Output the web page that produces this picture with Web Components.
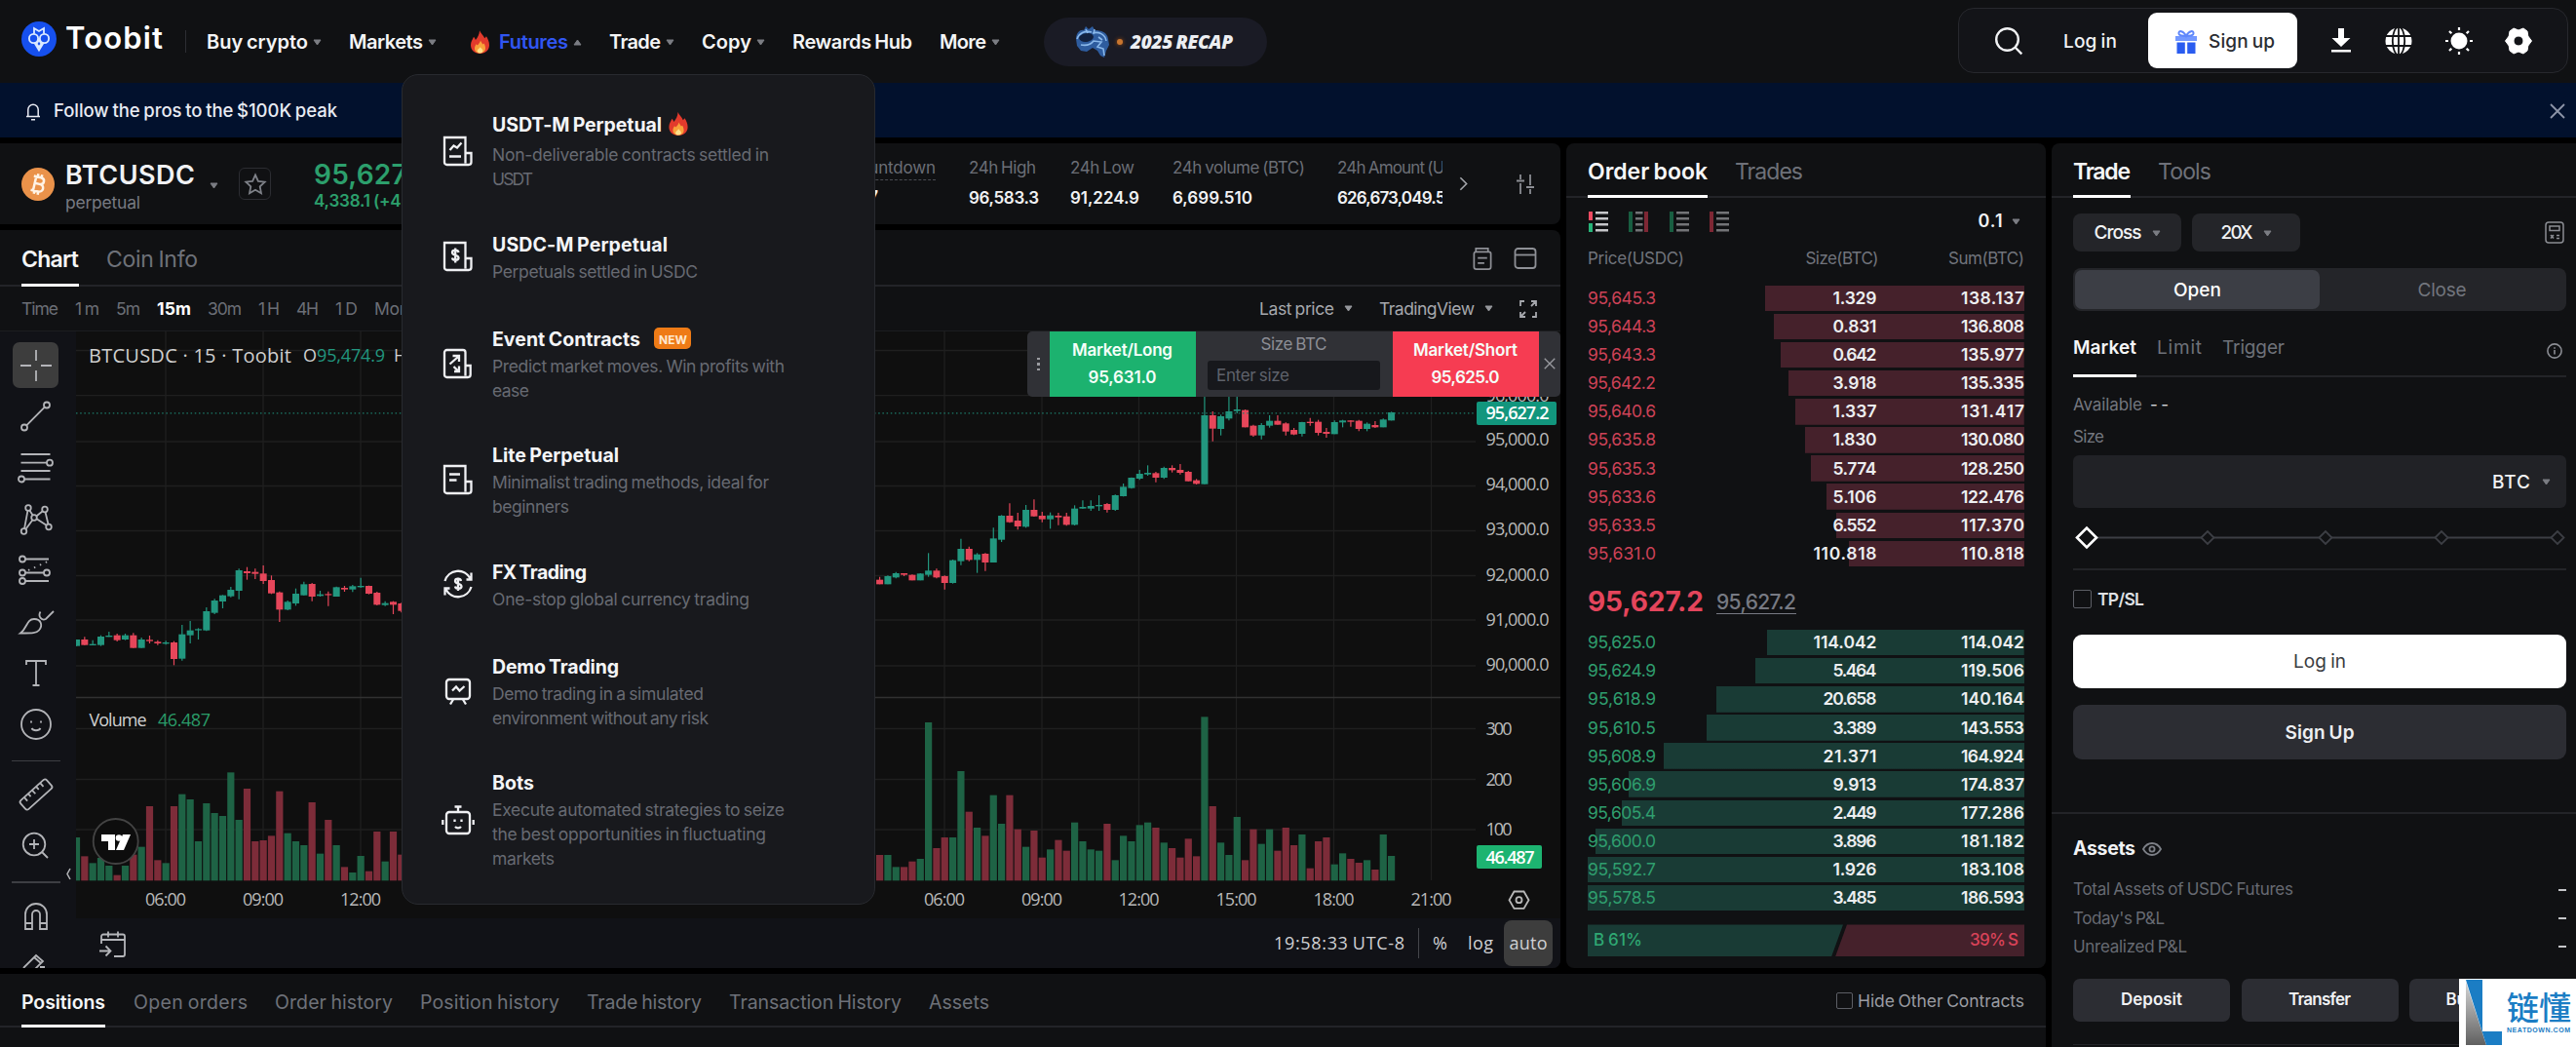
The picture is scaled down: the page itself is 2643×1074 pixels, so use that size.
<!DOCTYPE html>
<html lang="en">
<head>
<meta charset="utf-8">
<title>BTCUSDC perpetual | Toobit</title>
<style>
  html, body { margin: 0; padding: 0; }
  body {
    position: relative;
    width: 2643px;
    height: 1074px;
    overflow: hidden;
    background: #000;
    color: #f1f2f4;
    font-family: Inter, "Liberation Sans", sans-serif;
    font-size: 18px;
    --panel: #101113;
    --line: #232428;
    --muted: #6b6e76;
    --up: #2c9f6c;
    --down: #d6435a;
  }
</style>
</head>
<body>
<toobit-app></toobit-app>

<script>
const ICONS = {
  logo: ['0 0 36 36', `<circle cx="18" cy="18" r="18" fill="#1650ee" stroke="none"/><g fill="none" stroke="#dcebff" stroke-width="1.800"><circle cx="12.500" cy="17.500" r="4.600"/><circle cx="23.500" cy="17.500" r="4.600"/><path d="M13 12.500V7l5 3 5-3v5.500M13.500 22L18 29.500l4.500-7.500M18 19l-2.500 4L18 26l2.500-3z"/></g>`],
  fire: ['0 0 20 25', `<g stroke="none"><path d="M9.500 0c1 3 4.500 5.500 5.500 8.500l1.800-2C18.500 9 20 12.500 20 16c0 5.500-4 9-10 9S0 21.500 0 16c0-4 2-6 3.200-9 1 1 1.500 2 2 3.300C7.500 7.500 9.500 4 9.500 0z" fill="#e23a2c"/><path d="M10.500 11c.8 2 2 3 2.500 4.200l1.200-1c1 1.500 1.600 3 1.600 5 0 3.500-2.300 5.300-5.800 5.300s-5.800-1.800-5.800-5c0-2.200 1-3.300 1.600-4.700l1.500 1.300c1.600-1.600 2.700-3 3.200-5.100z" fill="#f9a13a"/><path d="M10.300 18c.6 1.500 2.700 2 2.700 4s-1.300 2.500-3 2.500-3-.8-3-2.400c0-1.800 2.400-2.300 3.300-4.100z" fill="#fde08a"/></g>`],
  croc: ['0 0 36 34', `<g stroke="none"><path d="M1 14c0-7 5-10 8-9l2-4 3 3 4-3 2 4c7 0 13 2 14 9l1 6-3 6-2 7-4-2-3-5-5-3-6 4-6-1-4-5z" fill="#2e5c9e"/><path d="M4 13c1-4 6-5 10-5s7 4 3 7-12 3-13-2z" fill="#12213f"/></g><path d="M2 14c2-6 8-9 15-7M18 8c6-2 13 1 14 8M6 20c5 1 10 0 13-4l8 1-4 5 6 2 1 7M11 4l2 4M20 4l-1 5M24 12l4 3" stroke="#8ab8ea" stroke-width="1.600" fill="none"/>`],
  search: ['0 0 28 28', `<circle cx="12.500" cy="12.500" r="11.300"/><path d="M20.500 20.500l6.800 6.800"/>`],
  gift: ['0 0 22 24', `<g fill="#2a5cf0" stroke="none"><path d="M0 6h22v5H0z" fill="#7398ff"/><path d="M1.500 12.500h8.300V24H1.500zM12.200 12.500h8.300V24h-8.300z"/></g><path d="M11 6C8 0 3 0 3.500 3.500 4 6 8 6 11 6c3 0 7 0 7.500-2.500C19 0 14 0 11 6z" stroke="#5f87fb" stroke-width="2"/>`],
  download: ['0 0 22 25', `<path d="M8 0h6v10h6.500L11 19 1.500 10H8zM1 22h20v2.500H1z" fill="#fff" stroke="none"/>`],
  globe: ['0 0 28 28', `<circle cx="14" cy="14" r="13.500" fill="#fff" stroke="none"/><path d="M14 0v28M0 9h28M0 19h28" stroke="#131417" stroke-width="1.800"/><ellipse cx="14" cy="14" rx="6.200" ry="14.500" stroke="#131417" stroke-width="1.800"/>`],
  sun: ['0 0 28 28', `<circle cx="14" cy="14" r="8.500" fill="#fff" stroke="none"/><path d="M14 0v3M14 25v3M0 14h3M25 14h3M4 4l2.300 2.300M21.700 21.700L24 24M24 4l-2.300 2.300M4 24l2.300-2.300" stroke="#fff" stroke-width="2.200"/>`],
  gear: ['0 0 28 28', `<path fill-rule="evenodd" fill="#fff" stroke="#fff" stroke-width="1" stroke-linejoin="round" d="M9 1l5 2 5-2 4 3 .8 5L27.500 14l-3.700 5-.8 5-4 3-5-2-5 2-4-3-.8-5L.5 14l3.700-5L5 4zM14 9a5 5 0 100 10 5 5 0 000-10z"/>`],
  bell: ['0 0 16 19', `<path d="M1 14.500h14M2.800 14.500V7.500a5.200 5.200 0 0110.400 0v7M6 17.800h4"/>`],
  close: ['0 0 16 16', `<path d="M1 1l14 14M15 1L1 15"/>`],
  btc: ['0 0 34 34', `<circle cx="17" cy="17" r="17" fill="#ea924a" stroke="none"/><g transform="rotate(13 17 17)" fill="none" stroke="#fff3e6" stroke-width="2.500"><path d="M13.500 9.500v15M11 9.700h7.500c5 0 5 6.800 0 6.800h-5M18.500 16.500c6 0 6 7.800 0 7.800H11M15 6.500v3M19 6.500v3M15 24.500v3M19 24.500v3"/></g>`],
  star: ['0 0 22 22', `<path d="M11 1.500l2.900 6.300 6.800.8-5 4.700 1.300 6.900-6-3.400-6 3.400 1.300-6.900-5-4.700 6.800-.8z"/>`],
  chevron: ['0 0 10 16', `<path d="M1.500 1l7 7-7 7"/>`],
  sliders: ['0 0 20 20', `<path d="M5 0v5M5 9v11M1 6.500h8M15 0v11M15 15v5M11 13h8"/>`],
  doc: ['0 0 20 24', `<path d="M3 4.500h14a2 2 0 012 2v14a2.500 2.500 0 01-2.500 2.500h-13A2.500 2.500 0 011 20.500v-14a2 2 0 012-2zM3 4.500V1h13v3.500M5 11h10M5 16.500h7"/>`],
  window: ['0 0 24 22', `<rect x="1.500" y="1" width="21" height="20" rx="3"/><path d="M1.500 7.500h21"/>`],
  expand: ['0 0 18 18', `<path d="M1 6V1h4M12 1h5v5M17 1l-5 5M17 12v5h-4M6 17H1v-5M1 17l5-5"/>`],
  calc: ['0 0 20 23', `<rect x="1" y="1" width="18" height="21" rx="3"/><path d="M5 5h10v4.500H5zM6 14l3 3.500M9 14l-3 3.500M12 14.500h3M12 17.500h3"/>`],
  info: ['0 0 18 18', `<circle cx="9" cy="9" r="8"/><path d="M9 8v5M9 4.700v1.800"/>`],
  eye: ['0 0 20 14', `<path d="M1 7c4.500-8 13.500-8 18 0-4.500 8-13.500 8-18 0z"/><circle cx="10" cy="7" r="2.600"/>`],
  calendar: ['0 0 28 28', `<path d="M3 14V6.500A2 2 0 015 4.500h20a2 2 0 012 2V25a2 2 0 01-2 2h-9M3 10h24M10 1.500v6M20 1.500v6M1 21.500h11M7.500 16.500l5 5-5 5"/>`],
  mUsdt: ['0 0 30 30', `<path d="M22.500 27.500V1H1v25.500A2.500 2.500 0 003.500 29h22.300a2.700 2.700 0 002.700-2.700V17h-6M6.500 14l4-4.500 3.500 2 4.500-5M6 20.500h12"/>`],
  mUsdc: ['0 0 30 30', `<path d="M22.500 27.500V1H1v25.500A2.500 2.500 0 003.500 29h22.300a2.700 2.700 0 002.700-2.700V17h-6M15.500 11c-.5-3-6.500-3-6.500 0 0 3.500 6.500 2 6.500 5.500 0 3-6 3-6.500 0M12.200 6.500v15"/>`],
  mEvent: ['0 0 30 30', `<path d="M22.500 27.500V3.500A2.500 2.500 0 0020 1H3.500A2.500 2.500 0 001 3.500v23A2.500 2.500 0 003.500 29h21.500a2.700 2.700 0 002.700-2.700V17h-5M6.500 15.500L15 8M9.500 7H16v6M10.500 18l5 5M16 17.500V23h-5"/>`],
  mLite: ['0 0 30 30', `<path d="M22.500 27.500V1H1v25.500A2.500 2.500 0 003.500 29h22.300a2.700 2.700 0 002.700-2.700V17h-6M6 9.500h11M6 15.500h7.500"/>`],
  mFx: ['0 0 30 30', `<path d="M1.500 12a14 14 0 0126-2.500M28.500 3.500v7h-5M28.500 18a14 14 0 01-26 2.500M1.500 26.500v-7h5M18 12c-.5-3-6-3-6 0 0 3.500 6.500 2 6.500 5.500 0 3-6 3-6.500 0M15 8.500V22"/>`],
  mDemo: ['0 0 30 30', `<rect x="3" y="3" width="24" height="20" rx="3"/><path d="M9 14.500l4-4 3.500 4 5-4.500M10 23.500l-3 5M20 23.500l3 5"/>`],
  mBots: ['0 0 34 32', `<rect x="5" y="8" width="24" height="22" rx="3"/><path d="M17 8V2M13.500 2.500h7M1.300 16v5M32.700 16v5M13.500 15.500v2.500M20.500 15.500v2.500M14 23c1.500 1.800 4.500 1.800 6 0"/>`],
  tCross: ['0 0 40 40', `<path d="M20 4v11M20 25v11M4 20h11M25 20h11"/>`],
  tLine: ['0 0 40 40', `<circle cx="31" cy="8.500" r="3"/><circle cx="8" cy="31.500" r="3"/><path d="M10.200 29.300L28.800 10.700"/>`],
  tFib: ['0 0 40 40', `<path d="M4.500 6h30M4.500 14.700H31M4.500 23h30M8 31.500h26.500"/><circle cx="34" cy="14.700" r="3"/><circle cx="5" cy="31.500" r="3"/>`],
  tPattern: ['0 0 40 40', `<circle cx="12" cy="8" r="2.800"/><circle cx="29" cy="9.500" r="2.800"/><circle cx="18" cy="18" r="2.800"/><circle cx="7.500" cy="32" r="2.800"/><circle cx="33" cy="27.500" r="2.800"/><path d="M11.500 10.700L8 29.300M13.300 10.500l3.400 5M20.300 16.500l6.500-5.200M29.500 12.300l3 12.500M9.300 30l7.200-9.700M20.600 19.300l10 6.500"/>`],
  tForecast: ['0 0 40 40', `<circle cx="6" cy="8.500" r="3"/><circle cx="6" cy="22.500" r="3"/><circle cx="31" cy="22.500" r="3"/><circle cx="6" cy="31" r="3"/><path d="M9 8.500h24M9 22.500h19M9 31h24"/><path d="M12 20l20-9" stroke-dasharray="1.500 5"/>`],
  tBrush: ['0 0 40 40', `<path d="M4 31.500c7-5 6-14.500 14-14.500 7.500 0 9 7 5 11.500-3 3.500-9 3-19 3zM24.500 9.500c-3 5 1.500 9.500 5.500 7.500L38 9"/>`],
  tText: ['0 0 40 40', `<path d="M10 11V7h20v4M20 7v25M16.500 32h7"/>`],
  tSmile: ['0 0 40 40', `<circle cx="20" cy="20" r="15"/><path d="M15 16.500v2M25 16.500v2M15.500 24c1.500 3 7.500 3 9 0"/>`],
  tRuler: ['0 0 40 40', `<g transform="rotate(-42 20 20)"><rect x="2" y="14" width="36" height="12" rx="2.500"/><path d="M9 14v5M14.500 14v4M20 14v5M25.500 14v4M31 14v5"/></g>`],
  tZoom: ['0 0 40 40', `<circle cx="18" cy="18" r="11.300"/><path d="M26 26l6 6M18 13v10M13 18h10"/>`],
  tMagnet: ['0 0 40 40', `<path d="M9 33V18a11 11 0 0122 0v15h-7V18a4 4 0 00-8 0v15zM9 27h7M24 27h7"/>`],
  tPencil: ['0 0 40 40', `<path d="M7 21L20 8l7 6-13 13M18 10l7 6M24 20h5"/>`]
};

const icon = (name, w, h = w, extra = '') =>
  `<svg class="icon" width="${w}" height="${h}" viewBox="${ICONS[name][0]}" fill="none" stroke="currentColor" stroke-width="1.800" ${extra}>${ICONS[name][1]}</svg>`;

const t = (text, w, cls = '') => `<fit-text w="${w}" class="${cls}">${text}</fit-text>`;

class Base extends HTMLElement {
  constructor() {
    super();
    this.attachShadow({ mode: "open" });
  }

  connectedCallback() {
    this.render();
  }

  get style_() { return ""; }
  get template() { return ""; }

  render() {
    this.shadowRoot.innerHTML = `<style>
      * { box-sizing: border-box; }
      .icon { display: block; flex: none; overflow: visible; }
      .row { display: flex; align-items: center; }
      ${this.style_}
    </style>${this.template}`;
  }
}

// Text of a fixed width: the tracking is spread so the words fill it.
class FitText extends Base {
  get style_() {
    return `
      :host { display: block; flex: none; white-space: nowrap; line-height: 1.25; word-spacing: -.06em; }
      span { display: inline-block; }
    `;
  }

  get template() {
    return `<span><slot></slot></span>`;
  }

  render() {
    super.render();
    const w = parseFloat(this.getAttribute("w"));
    const span = this.shadowRoot.querySelector("span");
    const n = Math.max(this.textContent.length - 1, 1);
    const gap = (w - span.getBoundingClientRect().width) / n;
    this.style.letterSpacing = gap.toFixed(3) + "px";
    this.style.width = w + "px";
  }
}

class CaretMark extends Base {
  get style_() {
    return `
      :host { display: block; flex: none; color: #7b7d83; }
      :host([up]) svg { transform: rotate(180deg); }
      svg { display: block; }
    `;
  }

  get template() {
    return `<svg width="9" height="7" viewBox="0 0 9 7"><path d="M1 1h7L4.500 6z" fill="currentColor" stroke="currentColor" stroke-linejoin="round"/></svg>`;
  }
}

class NavItem extends Base {
  get style_() {
    return `
      :host { display: flex; align-items: center; font-size: 20px; font-weight: 600; color: #f4f5f6; }
      :host([open]) { color: #3056f2; }
      .icon { margin: -2px 10px 0 7px; }
      caret-mark { margin-left: 5px; }
    `;
  }

  get template() {
    const open = this.hasAttribute("open");
    return `${open ? icon("fire", 19, 24) : ""}
      ${t(this.getAttribute("label"), this.getAttribute("w"))}
      ${this.hasAttribute("plain") ? "" : `<caret-mark ${open ? "up" : ""}></caret-mark>`}`;
  }
}

class TopBar extends Base {
  get style_() {
    return `
      :host { display: flex; align-items: center; height: 85px; padding: 0 8px 0 22px; background: #101113; }
      .brand { display: flex; align-items: center; gap: 9px; margin-top: -6px; }
      .brand fit-text { font-size: 31px; font-weight: 600; color: #fff; }
      .divider { width: 1px; height: 23px; margin: 0 21px 0 23px; background: #2d2e33; }
      nav { display: flex; align-items: center; gap: 28px; padding-top: 2px; }
      .recap { width: 229px; height: 50px; margin-left: 45px; padding-left: 32px; border-radius: 25px; background: #1a1b25; display: flex; align-items: center; }
      .recap i { width: 6px; height: 6px; margin: 0 8px 0 7px; border-radius: 50%; background: #c9762f; box-shadow: 0 0 4px #9c4d14; }
      .recap fit-text { font: italic 800 19px "Open Sans", sans-serif; color: #eceef2; }
      .account { display: flex; align-items: center; width: 626px; height: 67px; margin-left: auto; margin-top: -2px; padding-left: 37px; border: 1px solid #27282d; border-radius: 16px; background: #131418; }
      .account > fit-text { margin: 3px 32px 0 42px; font-size: 19px; font-weight: 500; }
      button { width: 153px; height: 57px; margin: 0 34px 0 0; padding: 2px 0 0 28px; border: 0; border-radius: 9px; background: #fff; color: #2a2c31; display: flex; align-items: center; gap: 12px; font: 500 19px Inter, sans-serif; }
      .tools { display: flex; align-items: center; gap: 34px; }
      .tools .icon:last-child { margin-left: -1px; }
    `;
  }

  get template() {
    return `
      <div class="brand">${icon("logo", 36)}${t("Toobit", 100)}</div>
      <div class="divider"></div>
      <nav>
        <nav-item label="Buy crypto" w="104"></nav-item>
        <nav-item label="Markets" w="76"></nav-item>
        <nav-item label="Futures" w="71" open></nav-item>
        <nav-item label="Trade" w="53"></nav-item>
        <nav-item label="Copy" w="51"></nav-item>
        <nav-item label="Rewards Hub" w="123" plain></nav-item>
        <nav-item label="More" w="48"></nav-item>
      </nav>
      <div class="recap">${icon("croc", 36, 34)}<i></i>${t("2025 RECAP", 105)}</div>
      <div class="account">
        ${icon("search", 28, 28, 'style="stroke-width:2.400"')}
        ${t("Log in", 55)}
        <button>${icon("gift", 22, 24)}${t("Sign up", 68)}</button>
        <div class="tools">${icon("download", 22, 25)}${icon("globe", 28)}${icon("sun", 28)}${icon("gear", 28)}</div>
      </div>
    `;
  }
}

class NoticeBar extends Base {
  get style_() {
    return `
      :host { display: flex; align-items: center; height: 56px; padding: 2px 11px 0 26px; background: #02112d; color: #e8ebf3; font-size: 18.500px; font-weight: 500; }
      fit-text { margin-left: 13px; }
      .icon:last-of-type { margin-left: auto; color: #8d95a8; }
    `;
  }

  get template() {
    return `${icon("bell", 16, 19, 'style="stroke-width:1.500"')}<fit-text w="291">Follow the pros to the $100K peak</fit-text>${icon("close", 16)}`;
  }
}

class MenuItem extends Base {
  get style_() {
    return `
      :host { display: grid; grid-template-columns: 34px 1fr; column-gap: 18px; align-items: center; color: #fff; }
      .icon { justify-self: center; stroke-width: 2.300; color: #eff0f3; margin-top: -3px; }
      .title { display: flex; align-items: center; height: 25px; gap: 7px; font-size: 19.500px; font-weight: 700; color: #f4f5f7; }
      .title .icon { margin-top: -4px; }
      .tag { margin: -3px 0 0 7px; width: 38px; height: 22px; padding: 5px 0 0 5px; border-radius: 5px; background: #ef7b16; color: #ffe9d0; font-size: 12px; font-weight: 700; line-height: 1; }
      .text { font-size: 17.500px; line-height: 25px; color: #676a72; padding-top: 2px; }
      :host([hot]) .text { padding-top: 5px; }
      .text fit-text { line-height: 25px; }
    `;
  }

  get template() {
    const lines = this.getAttribute("lines").split("|").map(l => l.split("~"));
    const [label, w] = this.getAttribute("label").split("~");
    const name = this.getAttribute("icon");
    return `${name === "mBots" ? icon(name, 34, 32) : icon(name, 30)}
      <div>
        <div class="title">${t(label, w)}${this.hasAttribute("hot") ? icon("fire", 20, 24) : ""}${this.hasAttribute("new") ? `<div class="tag">${t("NEW", 29)}</div>` : ""}</div>
        <div class="text">${lines.map(([s, n]) => t(s, n)).join("")}</div>
      </div>`;
  }
}

class FuturesMenu extends Base {
  get style_() {
    return `
      :host { display: flex; flex-direction: column; gap: 45px; width: 486px; height: 852px; padding: 39px 0 0 40px; border: 1px solid #282a2f; border-radius: 17px; background: #18191d; }
      menu-item.tight { margin-bottom: -2.500px; }
    `;
  }

  get template() {
    return `
      <menu-item hot icon="mUsdt" class="tight" label="USDT-M Perpetual~174" lines="Non-deliverable contracts settled in~284|USDT~42"></menu-item>
      <menu-item icon="mUsdc" label="USDC-M Perpetual~180" lines="Perpetuals settled in USDC~211"></menu-item>
      <menu-item new icon="mEvent" class="tight" label="Event Contracts~152" lines="Predict market moves. Win profits with~300|ease~38"></menu-item>
      <menu-item icon="mLite" class="tight" label="Lite Perpetual~130" lines="Minimalist trading methods, ideal for~284|beginners~79"></menu-item>
      <menu-item icon="mFx" label="FX Trading~97" lines="One-stop global currency trading~264"></menu-item>
      <menu-item icon="mDemo" class="tight" label="Demo Trading~130" lines="Demo trading in a simulated~217|environment without any risk~222"></menu-item>
      <menu-item icon="mBots" label="Bots~43" lines="Execute automated strategies to seize~300|the best opportunities in fluctuating~281|markets~64"></menu-item>
    `;
  }
}

class TickerBar extends Base {
  get style_() {
    return `
      :host { display: flex; align-items: center; height: 83px; padding-left: 22px; background: var(--panel); border-radius: 0 8px 8px 0; overflow: hidden; }
      .name { margin-left: 11px; width: 133px; padding-top: 5px; }
      .name fit-text:first-child { font-size: 27px; font-weight: 600; line-height: 34px; }
      .name fit-text:last-child { font-size: 17.500px; color: #777a82; }
      caret-mark { margin: 3px 21px 0 15px; }
      .fav { display: grid; place-items: center; width: 33px; height: 33px; border: 1.500px solid #2c2d32; border-radius: 6px; color: #7e8188; }
      .price { margin-left: 44px; width: 130px; padding-top: 3px; color: var(--up); font-weight: 600; }
      .price fit-text:first-child { font-size: 28px; line-height: 34px; }
      .price fit-text:last-child { font-size: 17px; }
      .stats { display: flex; margin-left: 407px; width: 621px; overflow: hidden; margin-top: -1px; }
      .stat { flex: none; display: flex; flex-direction: column; gap: 9px; font-size: 17px; font-weight: 600; }
      .stat fit-text:first-child { font-weight: 400; color: var(--muted); }
      .count fit-text:first-child { align-self: flex-end; border-bottom: 1.500px dashed #4a4c52; margin-bottom: -1.500px; }
      .chev { margin-left: 17px; color: #a3a5aa; }
      .opts { margin-left: 49px; color: #8b8d93; }
    `;
  }

  get template() {
    const stat = (label, lw, value, vw, width) =>
      `<div class="stat" style="width:${width}px">${t(label, lw)}${t(value, vw)}</div>`;
    return `
      ${icon("btc", 34, 34, 'style="margin-top:1px"')}
      <div class="name">${t("BTCUSDC", 133)}${t("perpetual", 77)}</div>
      <caret-mark></caret-mark>
      <div class="fav">${icon("star", 22)}</div>
      <div class="price">${t("95,627.2", 119)}${t("4,338.1 (+4.75%)", 137)}</div>
      <div class="stats">
        <div class="stat count" style="width:101px;margin-right:34px">${t("Countdown", 91)}${t("01:27", 42)}</div>
        ${stat("24h High", 69, "96,583.3", 72, 104)}
        ${stat("24h Low", 66, "91,224.9", 71, 105)}
        ${stat("24h volume (BTC)", 136, "6,699.510", 82, 169)}
        ${stat("24h Amount (USDC)", 149, "626,673,049.573", 130, 150)}
      </div>
      <div class="chev">${icon("chevron", 9, 15)}</div>
      <div class="opts">${icon("sliders", 20)}</div>
    `;
  }
}

class TabStrip extends Base {
  // tabs: "label~width|label~width", the first is the active one
  get style_() {
    return `
      :host { display: flex; align-items: stretch; box-sizing: border-box; height: 57px; padding: 0 22px; border-bottom: 2px solid var(--line); font-size: var(--size, 23px); }
      .tab { display: flex; align-items: center; margin-right: var(--gap, 28px); color: #6e7179; margin-bottom: -2px; padding-top: var(--drop, 0px); border-bottom: 3px solid transparent; }
      .tab:first-of-type { font-weight: 600; color: #f5f6f7; border-color: #fff; }
      .end { margin-left: auto; display: flex; align-items: center; }
    `;
  }

  get template() {
    const gaps = (this.getAttribute("gaps") || "").split(",");
    return this.getAttribute("tabs").split("|").map((tab, i) => {
      const [s, w] = tab.split("~");
      return `<div class="tab" ${gaps[i] ? `style="margin-right:${gaps[i]}px"` : ""}>${t(s, w)}</div>`;
    }).join("") + `<div class="end"><slot></slot></div>`;
  }
}

// candle: colour, high, body top, body bottom, low (thirds of a pixel from the series base), volume top
const EARLY = `g 1068 1068 1088 1088 507
r 1060 1068 1085 1085 565
g 1070 1082 1086 1086 586
g 1055 1059 1085 1088 570
g 1044 1056 1060 1060 594
r 1050 1055 1070 1074 623
g 1050 1055 1068 1070 594
r 1048 1055 1094 1094 560
g 1062 1068 1094 1094 536
r 1056 1069 1073 1080 411
r 1070 1075 1080 1085 577
g 1072 1077 1081 1084 586
r 1073 1077 1128 1147 411
g 1023 1052 1127 1133 374
g 1011 1040 1055 1080 390
g 1033 1036 1039 1068 519
g 969 981 1040 1042 402
g 943 948 986 990 432
g 931 932 951 972 441
g 906 915 935 938 307
g 850 855 918 944 453
r 845 858 864 884 357
r 850 860 866 882 519
r 840 865 888 897 516
r 871 885 926 928 502
r 920 923 976 1014 365
g 948 952 976 978 494
g 911 927 957 964 519
g 890 898 932 932 531
r 894 897 936 950 399
g 918 929 934 936 557
r 920 928 931 965 453
g 905 907 936 936 531
r 903 909 914 921 598
g 900 904 914 922 615
g 878 903 907 909 564
r 902 903 927 929 611
r 921 924 961 963 489
g 950 956 962 965 581
r 950 952 961 990 489
r 955 957 980 985 560`;

const LATE = `r 815 824 838 838 561
g 811 813 838 838 561
g 800 804 817 820 598
r 804 804 809 813 598
r 808 809 826 826 581
g 804 805 826 826 573
g 742 796 809 815 153
r 790 796 817 820 540
r 811 813 834 854 507
g 762 764 834 836 507
g 698 729 767 779 303
r 722 729 763 767 428
g 742 746 763 803 477
r 742 744 771 797 502
g 664 697 771 771 377
g 625 627 701 708 465
r 589 627 647 649 377
r 618 642 660 670 482
g 594 609 661 664 536
r 577 609 629 630 486
r 615 627 638 647 569
g 617 626 638 667 544
r 618 627 632 656 515
r 618 629 655 658 548
g 595 605 655 657 461
g 580 600 605 606 519
g 580 597 605 612 544
g 564 594 598 612 548
r 588 591 609 617 465
g 562 564 609 612 577
g 528 538 567 568 502
g 509 510 542 544 519
g 486 498 513 517 469
g 472 495 500 504 461
r 492 496 510 524 477
g 476 480 510 514 523
r 472 480 487 494 540
r 468 486 495 500 569
r 489 492 521 521 511
r 514 518 529 531 565
g 257 318 530 530 136
r 306 318 359 398 411
g 316 321 360 380 523
g 260 306 328 334 561
g 258 300 305 312 444
r 300 302 355 355 577
r 347 350 380 384 482
g 342 348 380 392 527
g 318 335 350 356 482
r 318 335 347 347 548
r 340 343 368 380 477
r 357 363 377 379 531
g 338 339 375 383 498
r 326 338 342 350 602
r 332 338 372 380 519
r 357 369 375 387 507
g 334 339 376 376 590
g 332 334 340 355 556
r 333 334 338 353 573
r 332 335 360 367 585
g 340 344 360 367 577
r 336 348 355 357 606
g 328 331 355 355 498
g 307 309 334 334 564`;

class PriceChart extends Base {
  get style_() {
    return `
      :host { display: block; width: 1523px; height: 602px; background: #0f0f0f; }
      svg { display: block; }
      text { font-family: "Open Sans", "Noto Sans", sans-serif; font-size: 18px; font-weight: 500; fill: #b9b9b9; }
      .grid { stroke: #1f1f1f; stroke-width: 1.300; }
    `;
  }

  series(data, x0, base) {
    const body = { g: "#22977f", r: "#e6465a" };
    const vol = { g: "#1e6345", r: "#7d2c39" };
    return data.split("\n").map((line, i) => {
      const [c, ...v] = line.split(" ");
      const [hi, top, bottom, lo] = v.map(n => base + n / 3);
      const vy = 690 + v[4] / 3;
      const x = x0 + i * 8.333;
      return `<path d="M${x} ${hi}V${lo}" stroke="${body[c]}" stroke-width="1.200"/>
        <rect x="${x - 3.500}" y="${top}" width="7" height="${Math.max(bottom - top, 1.200)}" fill="${body[c]}"/>
        <rect x="${x - 3.600}" y="${vy}" width="7.200" height="${903.300 - vy}" fill="${vol[c]}"/>`;
    }).join("");
  }

  get template() {
    const hs = [359.500, 405.700, 453, 498.500, 544.500, 590.500, 636, 683, 747.500, 799.500, 851];
    const vs = [[170, "06:00"], [270, "09:00"], [370, "12:00"], [969, "06:00"], [1069, "09:00"], [1168.500, "12:00"], [1268.500, "15:00"], [1368.500, "18:00"], [1468.500, "21:00"]];
    const prices = [["96,000.0", 405], ["95,000.0", 450.500], ["94,000.0", 496.500], ["93,000.0", 542.500], ["92,000.0", 589], ["91,000.0", 635], ["90,000.0", 681]];
    const txt = (s, x, y, w, extra = "") => `<text x="${x}" y="${y}" textLength="${w}" ${extra}>${s}</text>`;
    return `
      <svg width="1523" height="602" viewBox="78 340 1523 602">
        <g class="grid">
          ${hs.map(y => `<path d="M78 ${y}H1514"/>`).join("")}
          ${vs.map(([x]) => `<path d="M${x} 340V903"/>`).join("")}
        </g>
        <path d="M78 715.500H1601" stroke="#313131" stroke-width="1.500"/>
        ${this.series(EARLY, 78.500, 300)}
        ${this.series(LATE, 902.600, 320)}
        <path d="M78 423.800H1514" stroke="#1d7d6b" stroke-width="1.300" stroke-dasharray="1.500 2.700"/>
        ${txt("BTCUSDC · 15 · Toobit", 91, 371.500, 208, 'style="font-size:20px;fill:#cfcfcf"')}
        ${txt("O", 311, 370.500, 12, 'style="fill:#cfcfcf"')}
        ${txt("95,474.9", 325, 370.500, 70, 'style="fill:#22977f"')}
        ${txt("H", 404, 370.500, 12, 'style="fill:#cfcfcf"')}
        ${txt("Volume", 91.500, 745, 59, 'style="fill:#cfcfcf"')}
        ${txt("46.487", 162, 745, 54, 'style="fill:#2a9c68"')}
        ${prices.map(([s, y]) => txt(s, 1524.500, y + 6.500, 65)).join("")}
        ${[["300", 747.500], ["200", 799], ["100", 850.500]].map(([s, y]) => txt(s, 1524.500, y + 6.500, 27)).join("")}
        <rect x="1515" y="412" width="82" height="24" rx="2" fill="#12967d"/>
        ${txt("95,627.2", 1524.500, 429.500, 65, 'style="fill:#fff;font-weight:600"')}
        <rect x="1515" y="867" width="67" height="24" rx="2" fill="#1db471"/>
        ${txt("46.487", 1524.500, 885.500, 50, 'style="fill:#fff;font-weight:600"')}
        ${vs.map(([x, s]) => txt(s, x - 21, 928.500, 42)).join("")}
        <circle cx="118.700" cy="863" r="23" fill="#0d0d0d" stroke="#434343" stroke-width="1.800"/>
        <path d="M104 856h14v16h-7v-9h-7zM126 856h8l-7 16h-8z" fill="#fff"/>
        <circle cx="122" cy="859.500" r="3.300" fill="#fff"/>
        <g fill="none" stroke="#b9b9b9" stroke-width="1.800"><path d="M1553.500 914.500h10l5 8.700-5 8.700h-10l-5-8.700z"/><circle cx="1558.500" cy="923.200" r="3"/></g>
      </svg>
    `;
  }
}

class QuickTrade extends Base {
  get style_() {
    return `
      :host { display: flex; width: 547px; height: 66.500px; background: #303136; border-radius: 5px; font-size: 17px; font-weight: 600; color: #f5fff9; overflow: hidden; }
      .grip { width: 22.500px; display: flex; flex-direction: column; align-items: center; justify-content: center; gap: 3px; }
      .grip i { width: 2.500px; height: 2.500px; background: #9b9ca1; }
      .side { width: 150px; display: flex; flex-direction: column; align-items: center; justify-content: center; gap: 6.500px; background: #1cb26f; }
      .side.short { background: #f63c52; }
      .mid { width: 202px; display: flex; flex-direction: column; align-items: center; gap: 6px; padding-top: 3px; font-weight: 400; color: #8c8e95; }
      .input { width: 177px; height: 30px; padding-left: 9px; display: flex; align-items: center; border-radius: 3px; background: #17181c; color: #5f626b; }
      .x { flex: 1; display: grid; place-items: center; color: #9a9ba0; }
    `;
  }

  get template() {
    return `
      <div class="grip"><i></i><i></i><i></i></div>
      <div class="side">${t("Market/Long", 103)}${t("95,631.0", 70)}</div>
      <div class="mid">${t("Size BTC", 68)}<div class="input">${t("Enter size", 75)}</div></div>
      <div class="side short">${t("Market/Short", 107)}${t("95,625.0", 70)}</div>
      <div class="x">${icon("close", 12)}</div>
    `;
  }
}

class DrawTools extends Base {
  get style_() {
    return `
      :host { flex: none; box-sizing: border-box; display: flex; width: 78px; height: 653px; padding: 11px 0 0 11px; background: #111217; overflow: hidden; color: #b3b4b8; }
      .list { display: flex; flex-direction: column; align-items: center; gap: 5.700px; width: 51px; }
      .tool { flex: none; display: grid; place-items: center; width: 47px; height: 47px; border-radius: 7px; }
      .tool:first-child { background: #3d3d3d; }
      hr { flex: none; width: 50px; height: 1.500px; margin: 7px 0 5px; border: 0; background: #3d3e43; }
      .fold { margin: 539px 0 0 6px; }
    `;
  }

  get template() {
    const names = ["tCross", "tLine", "tFib", "tPattern", "tForecast", "tBrush", "tText", "tSmile", "", "tRuler", "tZoom", "", "tMagnet", "tPencil"];
    return `<div class="list">${names.map(n => n ? `<div class="tool">${icon(n, 40)}</div>` : "<hr>").join("")}</div>
      <svg class="fold" width="5" height="13" viewBox="0 0 5 13" fill="none" stroke="currentColor" stroke-width="1.500"><path d="M4 1L1 6.500 4 12"/></svg>`;
  }
}

class ChartPanel extends Base {
  get style_() {
    return `
      :host { display: flex; flex-direction: column; background: var(--panel); border-radius: 0 8px 8px 0; overflow: hidden; height: 757px; }
      tab-strip { --gap: 28px; --drop: 5px; height: 58px; }
      tab-strip .row { gap: 22px; padding: 2px 2px 0 0; color: #8e9096; }
      .frames { display: flex; align-items: center; height: 46px; padding: 0 24px 0 22px; font-size: 17.500px; color: var(--muted); border-bottom: 1px solid #1c1d20; }
      .frames > fit-text { margin-right: 17px; }
      .frames .on { color: #fff; font-weight: 700; }
      .frames .end { display: flex; align-items: center; margin-left: auto; color: #a6a8ad; }
      .frames caret-mark { margin: 0 27px 0 10px; color: #96989d; }
      .body { display: flex; }
      .stage { position: relative; width: 1523px; }
      quick-trade { position: absolute; left: 976px; top: 0; }
      .foot { display: flex; align-items: center; height: 51px; padding: 0 8px 0 23px; background: #111217; font: 18px "Open Sans", "Noto Sans", sans-serif; color: #d0d1d4; }
      .foot .icon { color: #b5b6ba; margin-right: auto; }
      .foot .bar { width: 1px; height: 31px; margin: 0 14px 0 14px; background: #45464b; }
      .auto { display: grid; place-items: center; width: 50px; height: 47px; margin-left: 11px; border-radius: 8px; background: #3d3d3d; }
    `;
  }

  get template() {
    return `
      <tab-strip tabs="Chart~59|Coin Info~94"><div class="row">${icon("doc", 20, 23)}${icon("window", 24, 22)}</div></tab-strip>
      <div class="frames">
        ${t("Time", 38)}${t("1m", 25)}${t("5m", 25)}${t("15m", 35, "on")}${t("30m", 35)}${t("1H", 22)}${t("4H", 23)}${t("1D", 23)}${t("More", 42)}
        <div class="end">${t("Last price", 77)}<caret-mark></caret-mark>${t("TradingView", 98)}<caret-mark></caret-mark>${icon("expand", 18)}</div>
      </div>
      <div class="body">
        <draw-tools></draw-tools>
        <div class="stage">
          <price-chart></price-chart>
          <quick-trade></quick-trade>
          <div class="foot">
            ${icon("calendar", 28)}
            ${t("19:58:33 UTC-8", 134)}<div class="bar"></div>${t("%", 18)}
            <div style="width:18px"></div>${t("log", 26)}
            <div class="auto">${t("auto", 39)}</div>
          </div>
        </div>
      </div>
    `;
  }
}

class BookRow extends Base {
  get style_() {
    const ask = this.getAttribute("side") === "ask";
    return `
      :host { display: grid; grid-template-columns: 100px 196.500px 151.500px; align-items: center; height: 26.500px; font-size: 17.500px; font-weight: 600; color: #eceef0;
        background: linear-gradient(${ask ? "#45212b,#45212b" : "#193b35,#193b35"}) right / ${this.getAttribute("bar")}px 100% no-repeat; }
      fit-text { justify-self: end; }
      fit-text:first-of-type { justify-self: start; font-weight: 400; color: ${ask ? "#cd4257" : "#2f9e6e"}; }
    `;
  }

  get template() {
    const size = this.getAttribute("size");
    const w = { 5: 45, 6: 55, 7: 65 }[size.length];
    return t(this.getAttribute("price"), 70) + t(size, w) + t(this.getAttribute("sum"), 65);
  }
}

const ASKS = [
  ["95,645.3", "1.329", "138.137", 266.300], ["95,644.3", "0.831", "136.808", 256.700],
  ["95,643.3", "0.642", "135.977", 249.700], ["95,642.2", "3.918", "135.335", 241.700],
  ["95,640.6", "1.337", "131.417", 234.700], ["95,635.8", "1.830", "130.080", 225],
  ["95,635.3", "5.774", "128.250", 219.300], ["95,633.6", "5.106", "122.476", 203],
  ["95,633.5", "6.552", "117.370", 193], ["95,631.0", "110.818", "110.818", 180.300]
];

const BIDS = [
  ["95,625.0", "114.042", "114.042", 263.700], ["95,624.9", "5.464", "119.506", 276],
  ["95,618.9", "20.658", "140.164", 316.300], ["95,610.5", "3.389", "143.553", 326],
  ["95,608.9", "21.371", "164.924", 370.300], ["95,606.9", "9.913", "174.837", 406.300],
  ["95,605.4", "2.449", "177.286", 413.300], ["95,600.0", "3.896", "181.182", 440],
  ["95,592.7", "1.926", "183.108", 448], ["95,578.5", "3.485", "186.593", 448]
];

class OrderBook extends Base {
  get style_() {
    return `
      :host { display: flex; flex-direction: column; background: var(--panel); border-radius: 8px; overflow: hidden; }
      tab-strip { --drop: 5px; height: 56px; }
      .modes { display: flex; align-items: center; gap: 21.500px; height: 49px; padding: 0 26px 0 22.500px; font-size: 18px; font-weight: 600; }
      .modes svg.dim { opacity: .55; }
      .modes fit-text { margin-left: auto; margin-right: -12px; }
      .head { display: grid; grid-template-columns: 100px 198.500px 149.500px; height: 40.500px; padding: 3px 22px 0; font-size: 17px; color: #71747c; }
      .head fit-text + fit-text { justify-self: end; }
      .rows { display: flex; flex-direction: column; gap: 2.630px; padding: 0 22px; }
      .last { display: flex; align-items: center; gap: 13px; height: 64.700px; padding: 8px 22px 0; }
      .last fit-text:first-child { font-size: 28px; font-weight: 700; color: #e4455c; }
      .last fit-text:last-child { font-size: 21px; font-weight: 500; color: #777a83; line-height: 22px; border-bottom: 1.500px solid #777a83; margin-top: 2px; }
      .ratio { display: flex; gap: 4px; height: 33px; margin: 14px 22px 0; font-size: 17px; font-weight: 500; }
      .ratio div { display: flex; align-items: center; padding: 0 6px; }
      .buy { width: 262px; background: #193b35; color: #2fa873; clip-path: polygon(0 0, 100% 0, calc(100% - 12px) 100%, 0 100%); }
      .sell { flex: 1; margin-left: -12px; justify-content: flex-end; background: #45212b; color: #da4359; clip-path: polygon(12px 0, 100% 0, 100% 100%, 0 100%); }
    `;
  }

  mode(left, right, dim) {
    return `<svg width="20" height="21" viewBox="0 0 20 21" class="${dim ? "dim" : ""}">${left}${[0, 6, 12, 18].map(y => `<rect x="7" y="${y}" width="${right ? 7.500 : 13}" height="2.500" fill="#c5c6c9"/>`).join("")}${right}</svg>`;
  }

  get template() {
    const rows = (list, side) => `<div class="rows">${list.map(([p, s, m, b]) => `<book-row side="${side}" price="${p}" size="${s}" sum="${m}" bar="${b}"></book-row>`).join("")}</div>`;
    const g = `<rect width="4" height="21" fill="#1f9d68"/>`;
    const r = `<rect width="4" height="21" fill="#d8394f"/>`;
    return `
      <tab-strip tabs="Order book~123|Trades~70"></tab-strip>
      <div class="modes">
        ${this.mode(`<rect width="4" height="9" fill="#ef4b62"/><rect y="12" width="4" height="9" fill="#27b479"/>`, "")}
        ${this.mode(g, `<rect x="16" width="4" height="21" fill="#d8394f"/>`, true)}
        ${this.mode(g, "", true)}
        ${this.mode(r, "", true)}
        ${t("0.1", 25)}<caret-mark></caret-mark>
      </div>
      <div class="head">${t("Price(USDC)", 99)}${t("Size(BTC)", 75)}${t("Sum(BTC)", 78)}</div>
      ${rows(ASKS, "ask")}
      <div class="last">${t("95,627.2", 119)}${t("95,627.2", 82)}</div>
      ${rows(BIDS, "bid")}
      <div class="ratio"><div class="buy">${t("B 61%", 50)}</div><div class="sell">${t("39% S", 50)}</div></div>
    `;
  }
}

class TradeForm extends Base {
  get style_() {
    return `
      :host { display: flex; flex-direction: column; background: var(--panel); border-radius: 8px 0 0 0; overflow: hidden; }
      tab-strip { --drop: 5px; height: 56px; }
      .pad { padding: 0 10px 0 22px; }
      .margin { display: flex; align-items: center; gap: 11px; margin-top: 16px; font-size: 19px; font-weight: 500; }
      .chip { display: flex; align-items: center; justify-content: center; gap: 10px; width: 111px; height: 39px; padding-top: 1px; border-radius: 8px; background: #242529; }
      .margin .icon { margin-left: auto; color: #8b8d93; margin-right: 2px; }
      .seg { display: flex; height: 44px; margin-top: 17px; padding: 2px; border-radius: 8px; background: #242529; font-size: 19px; color: #72757d; }
      .seg div { display: grid; place-items: center; width: 251px; padding-top: 2px; border-radius: 7px; }
      .seg div:first-child { background: #3c3e45; color: #fff; font-weight: 500; }
      .types { --size: 19px; --gap: 21px; --drop: 8px; height: 66px; padding: 0; margin-top: 2px; }
      .types .icon { color: #8b8d93; margin: 14px 4px 0 0; }
      .small { font-size: 17px; color: #74777f; display: flex; align-items: center; }
      .amount { display: flex; align-items: center; justify-content: flex-end; gap: 12px; height: 54px; padding: 1px 16px 0 0; border-radius: 6px; background: #212226; font-size: 19px; font-weight: 500; }
      .steps { display: block; }
      .rule { height: 1.500px; background: var(--line); }
      .tpsl { display: flex; align-items: center; gap: 6px; height: 68px; padding-bottom: 4px; margin-top: -2px; font-size: 17.500px; font-weight: 600; color: #dfe0e3; }
      .box { width: 19px; height: 19px; border: 1.500px solid #5c5e65; border-radius: 2px; }
      .btn { display: grid; place-items: center; height: 55.500px; padding-top: 2px; border-radius: 9px; background: #2c2d33; color: #eeeff2; font-size: 19px; font-weight: 600; }
      .btn.light { background: #fff; color: #3a3c42; margin-bottom: 17px; font-weight: 400; }
      .assets { display: flex; align-items: center; gap: 7px; height: 72px; font-size: 19.500px; font-weight: 700; }
      .assets .icon { color: #7d8087; }
      .line { display: flex; justify-content: space-between; align-items: center; height: 29.100px; font-size: 17px; color: #676a72; }
      .line i { width: 8px; height: 2px; background: #c5c6c9; }
      .acts { display: flex; gap: 11.500px; margin-top: 18px; font-size: 17px; font-weight: 600; }
      .acts div { display: grid; place-items: center; flex: none; width: 161px; height: 44.500px; border-radius: 7px; background: #2c2d33; }
    `;
  }

  get template() {
    const steps = [2265, 2386, 2505, 2624].map(x => `<path d="M${x - 6.500} 20l6.500-6.500 6.500 6.500-6.500 6.500z"/>`).join("");
    return `
      <tab-strip tabs="Trade~59|Tools~55"></tab-strip>
      <div class="pad">
        <div class="margin">
          <div class="chip">${t("Cross", 49)}<caret-mark></caret-mark></div>
          <div class="chip">${t("20X", 33)}<caret-mark></caret-mark></div>
          ${icon("calc", 20, 23, 'style="stroke-width:1.500"')}
        </div>
        <div class="seg"><div>${t("Open", 49)}</div><div>${t("Close", 50)}</div></div>
        <tab-strip class="types" tabs="Market~65|Limit~46|Trigger~64">${icon("info", 16)}</tab-strip>
        <div class="small" style="height:29px;margin-top:14px">${t("Available", 71)}<span style="margin-left:8px;color:#d5d6d9">${t("- -", 19)}</span></div>
        <div class="small" style="height:37px">${t("Size", 32)}</div>
        <div class="amount">${t("BTC", 39)}<caret-mark></caret-mark></div>
        <svg class="steps" width="506" height="62" viewBox="2127 -10.500 506 62" fill="#101113" stroke="#3c3e44" stroke-width="1.800">
          <path d="M2150 20H2624"/>${steps}
          <path d="M2131 20l10-10 10 10-10 10z" stroke="#fff" stroke-width="2.600"/>
        </svg>
        <div class="rule"></div>
        <div class="tpsl"><div class="box"></div>${t("TP/SL", 48)}</div>
        <div class="btn light">${t("Log in", 54)}</div>
        <div class="btn">${t("Sign Up", 71)}</div>
      </div>
      <div class="rule" style="margin-top:54.500px"></div>
      <div class="pad">
        <div class="assets">${t("Assets", 64)}${icon("eye", 20, 14)}</div>
        <div style="margin-top:-8px">
          <div class="line">${t("Total Assets of USDC Futures", 226)}<i></i></div>
          <div class="line">${t("Today's P&amp;L", 94)}<i></i></div>
          <div class="line">${t("Unrealized P&amp;L", 117)}<i></i></div>
        </div>
        <div class="acts"><div>${t("Deposit", 63)}</div><div>${t("Transfer", 64)}</div><div>${t("Buy crypto", 86)}</div></div>
        <div class="rule" style="margin-top:22.500px"></div>
      </div>
    `;
  }
}

class PositionsPanel extends Base {
  get style_() {
    return `
      :host { display: block; background: var(--panel); border-radius: 0 8px 0 0; overflow: hidden; }
      tab-strip { --size: 19.500px; --drop: 6px; height: 55px; }
      .hide { display: flex; align-items: center; gap: 5px; padding-top: 2px; font-size: 17.500px; color: #9a9ca2; }
      .box { width: 17px; height: 17px; border: 1.500px solid #5c5e65; border-radius: 2px; }
    `;
  }

  get template() {
    return `<tab-strip gaps="29,28,28,28,28,28,0" tabs="Positions~86|Open orders~117|Order history~121|Position history~143|Trade history~118|Transaction History~177|Assets~62">
      <div class="hide"><div class="box"></div>${t("Hide Other Contracts", 171)}</div>
    </tab-strip>`;
  }
}

class SiteMark extends Base {
  get style_() {
    return `
      :host { display: flex; width: 120px; height: 70px; background: #fff; color: #1b7dc4; }
      .words { margin-left: 4px; padding-top: 8px; }
      .words fit-text:first-child { font: 500 33px "Noto Sans CJK SC", sans-serif; line-height: 40px; }
      .words fit-text:last-child { font: 700 7px "Liberation Sans", sans-serif; line-height: 10px; }
    `;
  }

  get template() {
    return `
      <svg width="45" height="70" viewBox="0 0 45 70">
        <defs><linearGradient id="g" x2="0" y2="1"><stop stop-color="#d6d6d6"/><stop offset="1" stop-color="#606060"/></linearGradient></defs>
        <path d="M7 3v65h21z" fill="url(#g)"/><path d="M7 1h17v53h20v14H28z" fill="#1b7dc4"/>
      </svg>
      <div class="words">${t("链懂", 66)}${t("NEATDOWN.COM", 65)}</div>
    `;
  }
}

class ToobitApp extends Base {
  get style_() {
    return `
      :host { display: block; }
      main { display: grid; grid-template: "tick book trade" 83px "chart book trade" 757px "pos pos trade" 75px / 1601px 492px 538px; gap: 6px; padding-top: 6px; }
      ticker-bar { grid-area: tick; }
      chart-panel { grid-area: chart; }
      order-book { grid-area: book; }
      trade-form { grid-area: trade; }
      positions-panel { grid-area: pos; }
      futures-menu { position: absolute; left: 412px; top: 76px; box-sizing: border-box; }
      site-mark { position: absolute; right: 0; bottom: 0; }
    `;
  }

  get template() {
    return `
      <top-bar></top-bar>
      <notice-bar></notice-bar>
      <main>
        <ticker-bar></ticker-bar>
        <chart-panel></chart-panel>
        <order-book></order-book>
        <trade-form></trade-form>
        <positions-panel></positions-panel>
      </main>
      <futures-menu></futures-menu>
      <site-mark></site-mark>
    `;
  }
}

customElements.define("fit-text", FitText);
customElements.define("caret-mark", CaretMark);
customElements.define("nav-item", NavItem);
customElements.define("top-bar", TopBar);
customElements.define("notice-bar", NoticeBar);
customElements.define("menu-item", MenuItem);
customElements.define("futures-menu", FuturesMenu);
customElements.define("ticker-bar", TickerBar);
customElements.define("tab-strip", TabStrip);
customElements.define("price-chart", PriceChart);
customElements.define("quick-trade", QuickTrade);
customElements.define("draw-tools", DrawTools);
customElements.define("chart-panel", ChartPanel);
customElements.define("book-row", BookRow);
customElements.define("order-book", OrderBook);
customElements.define("trade-form", TradeForm);
customElements.define("positions-panel", PositionsPanel);
customElements.define("site-mark", SiteMark);
customElements.define("toobit-app", ToobitApp);
</script>
</body>
</html>
